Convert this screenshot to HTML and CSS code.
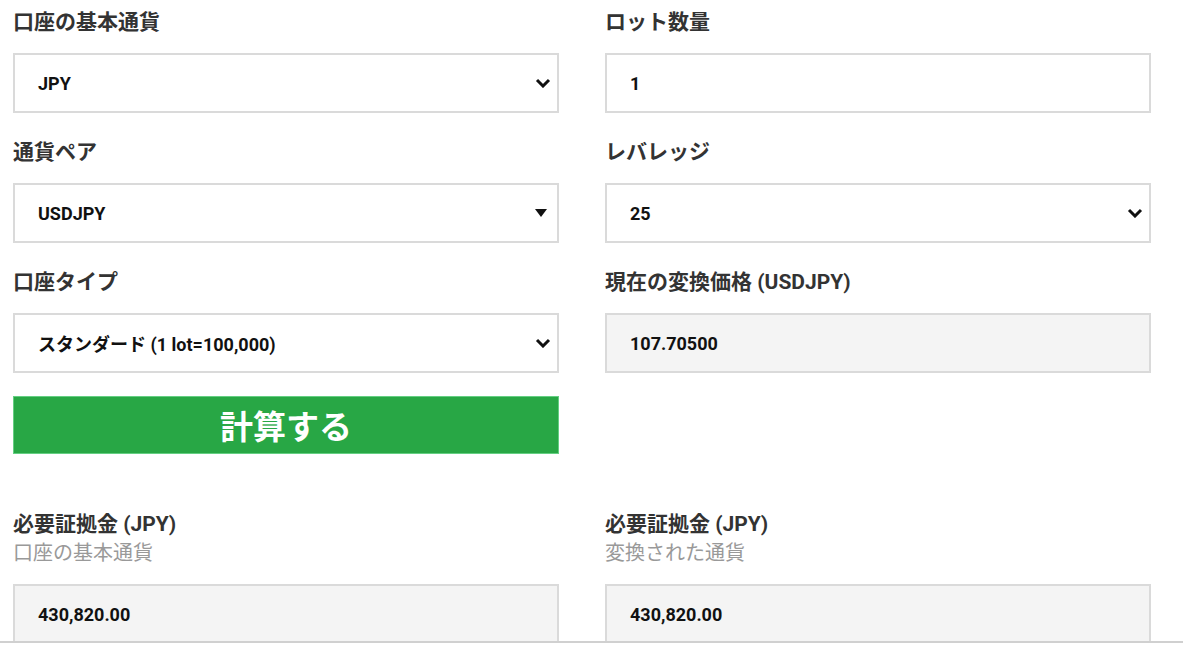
FILE: index.html
```html
<!DOCTYPE html>
<html lang="ja">
<head>
  <meta charset="UTF-8">
  <title>証拠金計算機</title>
  <link rel="stylesheet" href="styles.css">
</head>
<body>
  <div class="page">
    <div class="grid">
      <div class="field">
        <label>口座の基本通貨</label>
        <div class="box">
          <span>JPY</span>
          <svg class="chevron" width="16" height="10" viewBox="0 0 16 10"><path d="M2 2 L8 8 L14 2" fill="none" stroke="#111" stroke-width="3"/></svg>
        </div>
      </div>
      <div class="field">
        <label>ロット数量</label>
        <div class="box"><span>1</span></div>
      </div>

      <div class="field">
        <label>通貨ペア</label>
        <div class="box">
          <span>USDJPY</span>
          <svg class="caret" width="12" height="8" viewBox="0 0 12 8"><path d="M0 0 H12 L6 8 Z" fill="#111"/></svg>
        </div>
      </div>
      <div class="field">
        <label>レバレッジ</label>
        <div class="box">
          <span>25</span>
          <svg class="chevron" width="16" height="10" viewBox="0 0 16 10"><path d="M2 2 L8 8 L14 2" fill="none" stroke="#111" stroke-width="3"/></svg>
        </div>
      </div>

      <div class="field">
        <label>口座タイプ</label>
        <div class="box">
          <span>スタンダード (1 lot=100,000)</span>
          <svg class="chevron" width="16" height="10" viewBox="0 0 16 10"><path d="M2 2 L8 8 L14 2" fill="none" stroke="#111" stroke-width="3"/></svg>
        </div>
      </div>
      <div class="field">
        <label>現在の変換価格 (USDJPY)</label>
        <div class="box readonly"><span>107.70500</span></div>
      </div>

      <button class="calc">計算する</button>
      <div></div>

      <div class="field result">
        <label>必要証拠金 (JPY)</label>
        <div class="sub">口座の基本通貨</div>
        <div class="box readonly"><span>430,820.00</span></div>
      </div>
      <div class="field result">
        <label>必要証拠金 (JPY)</label>
        <div class="sub">変換された通貨</div>
        <div class="box readonly"><span>430,820.00</span></div>
      </div>
    </div>
  </div>
</body>
</html>
```

FILE: styles.css
```css
body {
  margin: 0;
  background: #fff;
  font-family: Roboto, "Noto Sans CJK JP", sans-serif;
  color: #333;
}
.page {
  height: 641px;
  overflow: hidden;
  border-bottom: 2px solid #d0d0d0;
}
.grid {
  display: grid;
  grid-template-columns: 546px 546px;
  column-gap: 46px;
  row-gap: 27px;
  padding: 10px 0 0 13px;
}
.field label {
  display: block;
  font-size: 21px;
  line-height: 24px;
  font-weight: bold;
  color: #333;
  margin-bottom: 19px;
}
.box {
  height: 60px;
  box-sizing: border-box;
  border: 2px solid #dadada;
  background: #fff;
  display: flex;
  align-items: center;
  justify-content: space-between;
  padding: 0 6px 0 23px;
  font-size: 18px;
  font-weight: bold;
  color: #111;
}
.box.readonly {
  background: #f4f4f4;
}
.caret {
  margin-right: 4px;
}
.calc {
  grid-column: 1;
  margin-top: -4px;
  height: 58px;
  background: #28a745;
  border: 1px solid #64cf82;
  color: #fff;
  font-family: Roboto, "Noto Sans CJK JP", sans-serif;
  font-size: 33px;
  font-weight: bold;
  padding: 0;
  cursor: pointer;
}
.result {
  margin-top: 31px;
}
.result label {
  margin-bottom: 5px;
}
.sub {
  font-size: 20px;
  line-height: 24px;
  color: #999;
  margin-bottom: 19px;
}
```
